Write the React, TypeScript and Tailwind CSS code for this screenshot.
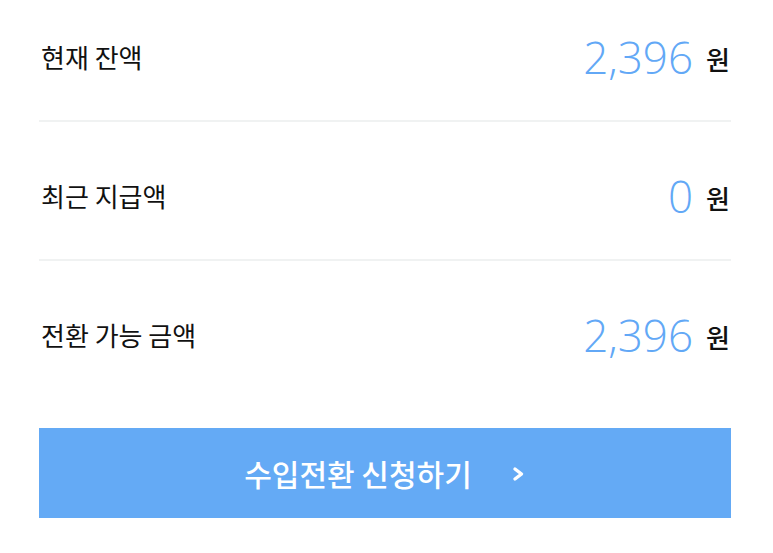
import React from "react";

const rows = [
  { label: "현재 잔액", value: "2,396", pt: "pt-[33px]" },
  { label: "최근 지급액", value: "0", pt: "pt-[50px]" },
  { label: "전환 가능 금액", value: "2,396", pt: "pt-[50px]" },
];

export default function App() {
  return (
    <div
      className="w-[773px] h-[553px] bg-white pl-[39px] pr-[42px]"
      style={{ fontFamily: '"Noto Sans CJK KR", "Noto Sans", sans-serif' }}
    >
      {rows.map((r, i) => (
        <div
          key={i}
          className={`${r.pt} pb-[39px] flex items-center justify-between ${
            i < rows.length - 1 ? "border-b-2 border-[#f0f2f2]" : ""
          }`}
        >
          <span className="text-[26px] leading-[48px] font-normal text-[#111] pl-[2px]">{r.label}</span>
          <div className="flex items-center h-[48px] pr-[1px]">
            <span
              className="text-[44px] leading-[48px] font-light text-[#62a8f6]"
              style={{ fontFamily: '"Open Sans", sans-serif' }}
            >
              {r.value}
            </span>
            <span className="ml-[13px] mt-[4px] text-[26px] leading-[48px] font-medium text-[#111]">원</span>
          </div>
        </div>
      ))}
      <button className="mt-[30px] w-[692px] h-[90px] bg-[#64aaf5] flex items-center justify-center text-white">
        <span className="text-[30px] font-medium leading-none">수입전환 신청하기</span>
        <svg
          className="ml-[39px] mt-[2px]"
          width="15"
          height="18"
          viewBox="0 0 15 18"
          fill="none"
          stroke="white"
          strokeWidth="3.4"
          strokeLinecap="round"
          strokeLinejoin="round"
        >
          <path d="M4 4l6.5 5-6.5 5" />
        </svg>
      </button>
    </div>
  );
}
